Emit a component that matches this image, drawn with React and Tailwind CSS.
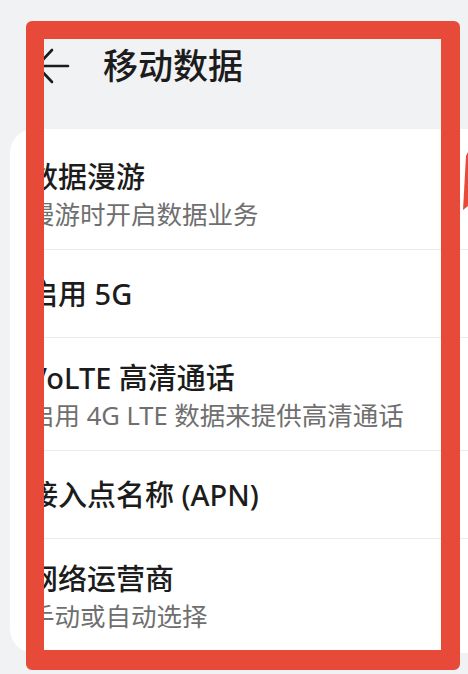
import React from "react";

const rows = [
  { title: "数据漫游", sub: "漫游时开启数据业务" },
  { title: "启用 5G" },
  { title: "VoLTE 高清通话", sub: "启用 4G LTE 数据来提供高清通话" },
  { title: "接入点名称 (APN)" },
  { title: "网络运营商", sub: "手动或自动选择" },
];

export default function App() {
  return (
    <div
      className="relative w-[468px] h-[674px] overflow-hidden bg-[#f1f2f4]"
      style={{ fontFamily: '"Noto Sans", "Noto Sans CJK SC", sans-serif' }}
    >
      <div className="flex items-center pt-[44px] pl-[34px]">
        <svg width="36" height="36" viewBox="0 0 36 36" fill="none" stroke="#1c1c1c" strokeWidth="2.6" strokeLinecap="round" strokeLinejoin="round">
          <path d="M3 18 H34 M18 2 L3 18 L18 34" />
        </svg>
        <div className="ml-[33px] text-[35px] leading-[44px] font-medium text-[#1c1c1c]">移动数据</div>
      </div>

      <div className="mt-[41px] ml-[10px] w-[490px] rounded-[24px] bg-white pt-[8px] pb-[2px]">
        {rows.map((r, i) => (
          <div key={i} className="pl-[19px]">
            <div
              className={
                (r.sub ? "pt-[21px] pb-[17px] " : "pt-[25px] pb-[24px] ") +
                (i < rows.length - 1 ? "border-b border-[#ebebeb]" : "")
              }
            >
              <div className="text-[29px] leading-[38px] font-medium text-[#1c1c1c] whitespace-nowrap">{r.title}</div>
              {r.sub && (
                <div className="text-[25.5px] leading-[36px] text-[#6f6f6f] whitespace-nowrap">{r.sub}</div>
              )}
            </div>
          </div>
        ))}
      </div>

      <div className="absolute left-[26px] top-[21px] w-[434px] h-[649px] border-[#e84a3a] border-l-[18px] border-t-[18px] border-r-[19px] border-b-[20px] rounded-[6px]" />
      <svg className="absolute left-[460px] top-[150px]" width="8" height="64" viewBox="0 0 8 64">
        <polygon points="6,6 8,2 8,56 3,60" fill="#e84a3a" />
      </svg>
    </div>
  );
}
